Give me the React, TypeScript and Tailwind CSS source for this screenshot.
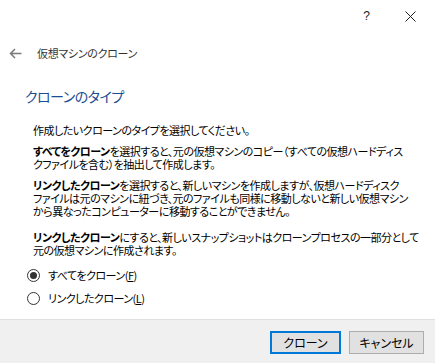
export default function App() {
  return (
    <div className="w-[435px] h-[363px] bg-white flex flex-col font-['Noto_Sans_CJK_JP',sans-serif] [font-feature-settings:'palt'] text-black overflow-hidden">
      {/* title bar */}
      <div className="h-[32px] flex items-center justify-end">
        <span className="text-[12px] leading-none text-[#222] mr-[35px] font-['Liberation_Sans',sans-serif]">?</span>
        <svg width="11" height="11" viewBox="0 0 11 11" className="mr-[19px]">
          <path d="M0.5 0.5 L10.5 10.5 M10.5 0.5 L0.5 10.5" stroke="#222" strokeWidth="1" />
        </svg>
      </div>

      {/* back + wizard title */}
      <div className="h-[42px] flex items-center">
        <svg width="13" height="11" viewBox="0 0 13 11" className="ml-[9px] mr-[15px]">
          <path d="M12.5 5.5 H1.5 M6 1 L1.5 5.5 L6 10" stroke="#7a7a7a" strokeWidth="1.5" fill="none" />
        </svg>
        <span className="text-[11px] leading-[16px] tracking-[-0.3px] text-[#333]">仮想マシンのクローン</span>
      </div>

      {/* heading */}
      <h1 className="mt-[10px] ml-[25px] text-[14px] leading-[24px] tracking-[-0.5px] text-[#1c4d94] font-normal">クローンのタイプ</h1>

      {/* body */}
      <div className="ml-[33px] mt-[16px] text-[11px] leading-[13px] tracking-[-0.5px] whitespace-nowrap flex flex-col gap-[8px]">
        <p>作成したいクローンのタイプを選択してください。</p>
        <p>
          <b>すべてをクローン</b>を選択すると、元の仮想マシンのコピー（すべての仮想ハードディス
          <br />
          クファイルを含む）を抽出して作成します。
        </p>
        <p>
          <b>リンクしたクローン</b>を選択すると、新しいマシンを作成しますが、仮想ハードディスク
          <br />
          ファイルは元のマシンに紐づき、元のファイルも同様に移動しないと新しい仮想マシン
          <br />
          から異なったコンピューターに移動することができません。
        </p>
        <p className="mt-[5px]">
          <b>リンクしたクローン</b>にすると、新しいスナップショットはクローンプロセスの一部分として
          <br />
          元の仮想マシンに作成されます。
        </p>
      </div>

      {/* radios */}
      <div className="ml-[27px] mt-[12px] flex flex-col gap-[10px] text-[11px] leading-[13px] tracking-[-0.5px]">
        <label className="flex items-center gap-[8px]">
          <span className="w-[13px] h-[13px] rounded-full border border-[#333] flex items-center justify-center">
            <span className="w-[7px] h-[7px] rounded-full bg-[#333]" />
          </span>
          <span>
            すべてをクローン(<span className="underline">F</span>)
          </span>
        </label>
        <label className="flex items-center gap-[8px]">
          <span className="w-[13px] h-[13px] rounded-full border border-[#333]" />
          <span>
            リンクしたクローン(<span className="underline">L</span>)
          </span>
        </label>
      </div>

      <div className="flex-1" />

      {/* footer */}
      <div className="h-[44px] bg-[#f0f0f0] border-t border-[#dfdfdf] flex justify-end items-start pt-[11px] pr-[11px] gap-[8px]">
        <button className="w-[71px] h-[23px] bg-[#e1e1e1] border-2 border-[#0078d7] text-[12px] leading-none text-black">
          クローン
        </button>
        <button className="w-[75px] h-[23px] bg-[#e1e1e1] border border-[#adadad] text-[12px] leading-none text-black">
          キャンセル
        </button>
      </div>
    </div>
  );
}
